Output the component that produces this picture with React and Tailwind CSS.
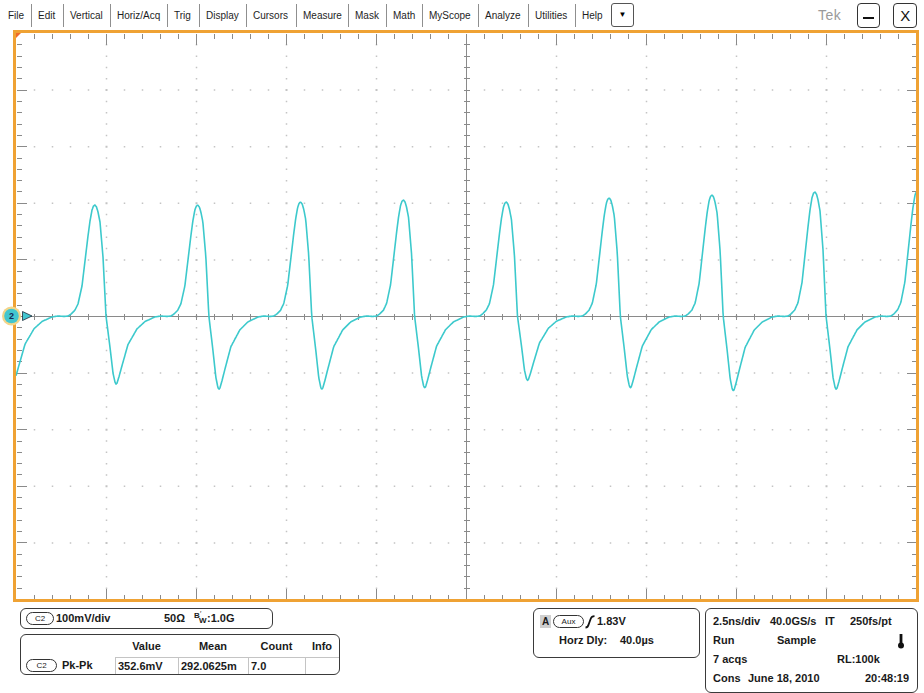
import React from "react";

const IW = 900, IH = 566, DX = 90, MX = 18, MY = 11.32, CY = 283, CX = 450;

const KP = [[-20,-6],[-17,-12],[-13,-30],[-10,-55],[-7,-80],[-5,-95],[-3,-106],[-1.5,-110],[0,-111],[1.5,-109],[3,-104],[5,-94],[8,-59],[11,0],[15,34],[18,62],[20,72],[21,74],[22,73],[24,66],[27,54],[33,31],[42,14],[50,6],[60,1],[66,0],[72,0.5],[76,0],[79,-2],[83,-6]];

function shape(t) {
  for (let k = 0; k < KP.length - 1; k++) {
    const [t0, v0] = KP[k], [t1, v1] = KP[k + 1];
    if (t >= t0 && t <= t1) return v0 + ((v1 - v0) * (t - t0)) / (t1 - t0);
  }
  return 0;
}

const P0 = 95, PER = 102.86;
const A = [1, 1, 1, 1.027, 1.045, 1.027, 1.063, 1.09, 1.117, 1.135, 1.15];
const B = [0.9, 0.92, 0.99, 0.99, 0.97, 0.87, 0.97, 1.01, 0.99, 1, 1];

function buildTrace() {
  let d = "";
  for (let x = 16; x <= 916; x += 0.5) {
    const i = Math.floor((x - P0 + 20) / PER);
    const t = x - (P0 + PER * i);
    let v = shape(t);
    const idx = i + 1;
    v = v < 0 ? v * A[idx] : v * B[idx];
    const px = x - 16, py = CY + v;
    d += (d ? "L" : "M") + px.toFixed(1) + " " + py.toFixed(1);
  }
  return d;
}

function buildDots() {
  let d = "";
  for (let i = 1; i < 10; i++) {
    if (i === 5) continue;
    for (let j = 1; j < 50; j++) {
      const x = i * DX, y = j * MY;
      const s = j % 5 === 0 ? 2 : 1.5;
      d += `M${(x - s / 2).toFixed(2)} ${(y - s / 2).toFixed(2)}h${s}v${s}h${-s}z`;
    }
  }
  for (let k = 1; k < 10; k++) {
    if (k === 5) continue;
    for (let m = 1; m < 50; m++) {
      if (m % 5 === 0) continue;
      const x = m * MX, y = k * MY * 5;
      d += `M${(x - 0.75).toFixed(2)} ${(y - 0.75).toFixed(2)}h1.5v1.5h-1.5z`;
    }
  }
  return d;
}

function buildTicks() {
  let d = "";
  for (let m = 1; m < 50; m++) {
    const x = m * MX;
    const L = m % 5 === 0 ? 11 : 5;
    d += `M${x} 0v${L}M${x} ${IH}v${-L}M${x} ${CY - 3}v6`;
  }
  for (let j = 1; j < 50; j++) {
    const y = (j * MY).toFixed(2);
    const L = j % 5 === 0 ? 10 : 5;
    d += `M0 ${y}h${L}M${IW} ${y}h${-L}M${CX - 3} ${y}h6`;
  }
  d += `M0 ${CY}H${IW}M${CX} 0V${IH}`;
  return d;
}

const TRACE = buildTrace();
const DOTS = buildDots();
const TICKS = buildTicks();

const MENU = [
  ["File", 31, 8],
  ["Edit", 31, 6],
  ["Vertical", 46, 6],
  ["Horiz/Acq", 56, 6],
  ["Trig", 31, 6],
  ["Display", 46, 6],
  ["Cursors", 49, 6],
  ["Measure", 51, 6],
  ["Mask", 37, 6],
  ["Math", 35, 6],
  ["MyScope", 55, 6],
  ["Analyze", 49, 6],
  ["Utilities", 46, 6],
];

function Pill({ children, w = "w-[28px]" }) {
  return (
    <span className={`${w} h-[13px] rounded-full border border-[#333] flex items-center justify-center text-[8px] font-normal leading-none text-[#222] shrink-0`}>
      {children}
    </span>
  );
}

export default function App() {
  return (
    <div className="w-[924px] h-[693px] bg-white relative overflow-hidden flex flex-col font-['Liberation_Sans',Arial,sans-serif] text-[#1a1a1a]">
      {/* Menu bar */}
      <div className="h-[30px] flex items-center shrink-0">
        {MENU.map(([label, w, pl], i) => (
          <React.Fragment key={label}>
            <div className={`h-[30px] flex items-center text-[10px] text-[#1e1e1e]`} style={{ width: w, paddingLeft: pl }}>
              {label}
            </div>
            <div className="w-px h-[23px] bg-[#8f8f8f] shrink-0" />
          </React.Fragment>
        ))}
        <div className="w-[35px] h-[30px] flex items-center pl-[6px] text-[10px] text-[#1e1e1e]">Help</div>
        <div className="w-[23px] h-[24px] border border-[#555] rounded-[3px] flex items-center justify-center text-[8px] leading-none text-black">▼</div>
        <div className="ml-[184px] text-[14px] text-[#9a9a9a] tracking-[0.5px] leading-none">Tek</div>
        <div className="ml-[16px] w-[23px] h-[25px] border border-[#333] rounded-[4px] flex items-end justify-center pb-[8px]">
          <div className="w-[11px] h-[2px] bg-[#111]" />
        </div>
        <div className="ml-[13px] w-[24px] h-[25px] border border-[#333] rounded-[4px] flex items-center justify-center text-[15px] leading-none text-[#111]">X</div>
      </div>

      {/* Graticule */}
      <div className="ml-[13px] w-[906px] h-[572px] border-[3px] border-[#efa234] relative shrink-0">
        <svg width={IW} height={IH} className="block">
          <g transform="translate(0.5,0.5)">
            <path d={DOTS} fill="#c4c4c4" />
            <path d={TICKS} stroke="#8a8a8a" strokeWidth="1" fill="none" shapeRendering="crispEdges" />
          </g>
          <polygon points="0,0 5,0 0,5" fill="#f06a2a" />
          <path d={TRACE} stroke="#3cc9cc" strokeWidth="1.6" fill="none" strokeLinejoin="round" />
        </svg>
      </div>

      {/* Bottom readouts */}
      <div className="flex pt-[6px] h-[91px] text-[11px] font-bold">
        <div className="ml-[20px] flex flex-col">
          <div className="w-[253px] h-[21px] border border-[#3a3a3a] rounded-[6px] flex items-center pl-[5px]">
            <Pill w="w-[28px]">C2</Pill>
            <span className="ml-[2px] w-[108px]">100mV/div</span>
            <span className="w-[30px]">50Ω</span>
            <span className="flex items-center">
              <span className="relative inline-flex items-start w-[13px] h-[13px]">
                <span className="text-[8px] leading-none">B</span>
                <span className="text-[8px] leading-none absolute left-[5px] top-[5px]">W</span>
                <span className="text-[7px] leading-none absolute left-[6px] top-[-2px] font-normal">′</span>
              </span>
              <span>:1.0G</span>
            </span>
          </div>
          <div className="mt-[5px] w-[320px] h-[41px] border border-[#3a3a3a] rounded-[6px] overflow-hidden grid grid-cols-[94px_63px_70px_57px_34px] grid-rows-[22px_17px]">
            <div />
            <div className="flex items-center justify-center">Value</div>
            <div className="flex items-center justify-center">Mean</div>
            <div className="flex items-center justify-center">Count</div>
            <div className="flex items-center justify-center">Info</div>
            <div className="flex items-center pl-[5px]">
              <Pill w="w-[31px]">C2</Pill>
              <span className="ml-[5px]">Pk-Pk</span>
            </div>
            <div className="border-l border-t border-[#c4c4c4] flex items-center pl-[2px]">352.6mV</div>
            <div className="border-l border-t border-[#c4c4c4] flex items-center pl-[2px]">292.0625m</div>
            <div className="border-l border-t border-[#c4c4c4] flex items-center pl-[2px]">7.0</div>
            <div className="border-l border-t border-[#c4c4c4]" />
          </div>
        </div>

        <div className="ml-[193px] w-[167px] h-[50px] border border-[#3a3a3a] rounded-[6px] flex flex-col">
          <div className="h-[19px] mt-[3px] flex items-center pl-[6px]">
            <span className="w-[11px] h-[13px] bg-[#cfcfcf] flex items-center justify-center text-[10px]">A</span>
            <span className="ml-[2px]"><Pill w="w-[31px]">Aux</Pill></span>
            <svg width="10" height="14" viewBox="0 0 10 14" className="ml-[1px]">
              <path d="M0.5 12.5 Q3 12.5 3.8 9 L5.8 3.5 Q6.6 1.2 9.5 1.2" stroke="#111" strokeWidth="1.8" fill="none" />
            </svg>
            <span className="ml-[2px]">1.83V</span>
          </div>
          <div className="h-[18px] flex items-center pl-[25px]">
            <span className="w-[61px]">Horz Dly:</span>
            <span>40.0µs</span>
          </div>
        </div>

        <div className="ml-[5px] w-[213px] h-[85px] border border-[#3a3a3a] rounded-[6px] flex flex-col pl-[7px] pt-[3px]">
          <div className="h-[19px] flex items-center">
            <span className="w-[57px]">2.5ns/div</span>
            <span className="w-[55px]">40.0GS/s</span>
            <span className="w-[25px]">IT</span>
            <span>250fs/pt</span>
          </div>
          <div className="h-[19px] flex items-center">
            <span className="w-[64px]">Run</span>
            <span className="w-[120px]">Sample</span>
            <svg width="8" height="16" viewBox="0 0 8 16">
              <rect x="2.6" y="1" width="2.8" height="11" fill="#111" />
              <circle cx="4" cy="12.5" r="3" fill="#111" />
            </svg>
          </div>
          <div className="h-[19px] flex items-center">
            <span className="w-[124px]">7 acqs</span>
            <span>RL:100k</span>
          </div>
          <div className="h-[19px] flex items-center">
            <span className="w-[35px]">Cons</span>
            <span className="w-[117px]">June 18, 2010</span>
            <span>20:48:19</span>
          </div>
        </div>
      </div>

      {/* Channel marker overlay */}
      <svg width="36" height="24" className="absolute left-0 top-[304px]">
        <circle cx="11.5" cy="12" r="9.5" fill="#f2d58a" />
        <circle cx="11.5" cy="12" r="7.3" fill="#43c6cf" />
        <text x="11.5" y="15.2" textAnchor="middle" fontSize="9" fontWeight="bold" fill="#16285a" fontFamily="Liberation Sans, Arial, sans-serif">2</text>
        <polygon points="22.5,7.5 32,12 22.5,16.5" fill="#43c6cf" stroke="#1d2b3a" strokeWidth="0.8" />
      </svg>
    </div>
  );
}
